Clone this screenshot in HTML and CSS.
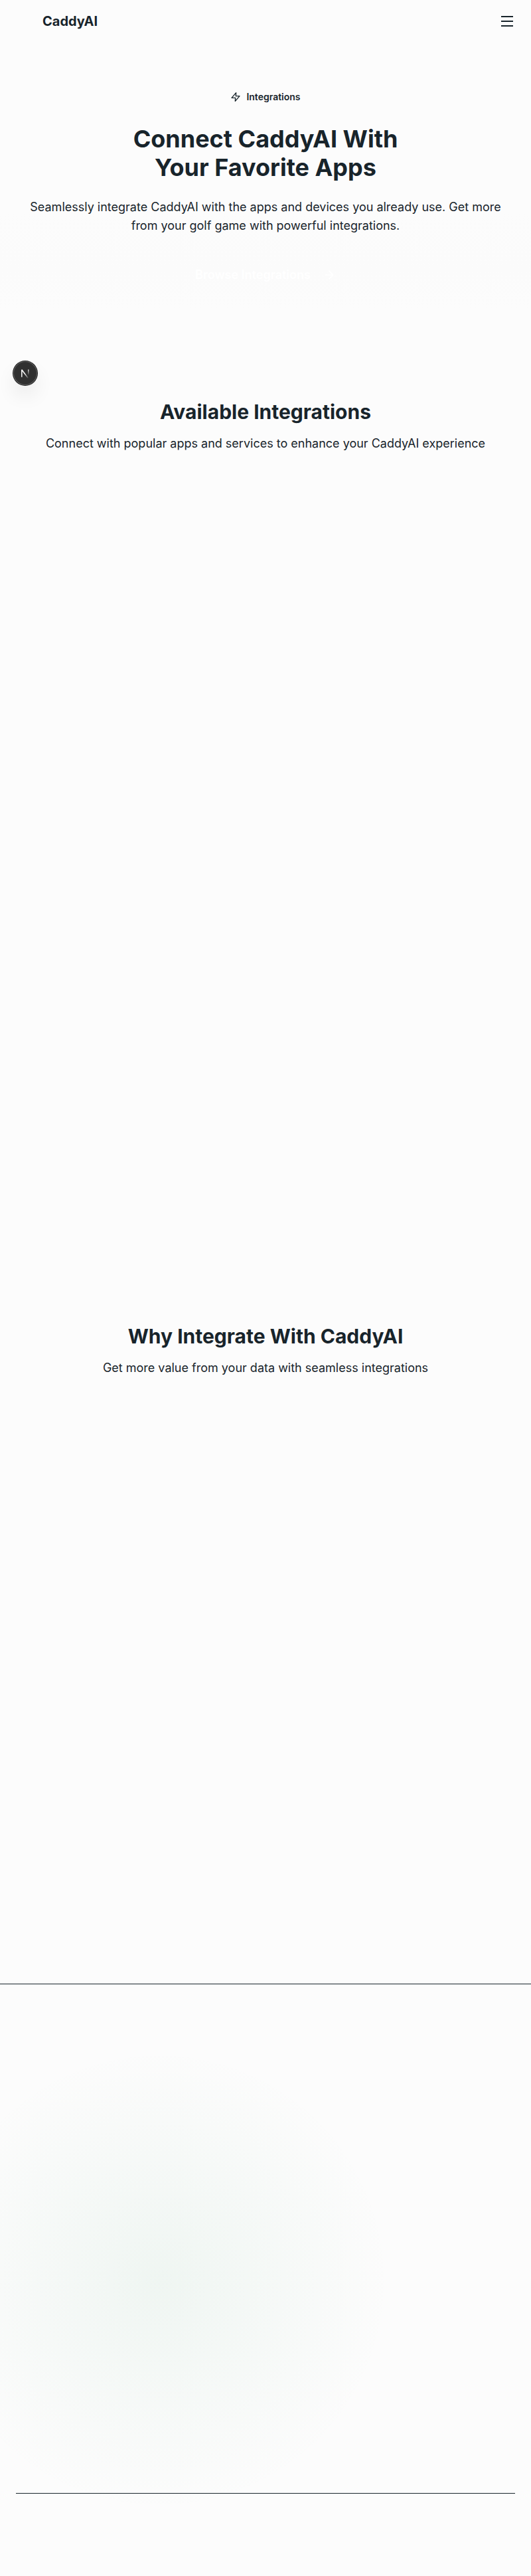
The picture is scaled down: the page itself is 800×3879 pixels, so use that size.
FILE: index.html
```html
<!DOCTYPE html>
<html lang="en">
<head>
<meta charset="utf-8">
<title>Integrations | CaddyAI</title>
<link rel="stylesheet" href="styles.css">
</head>
<body>
<header class="header">
  <span class="brand">CaddyAI</span>
  <svg class="menu" viewBox="0 0 24 24" fill="none" stroke="currentColor" stroke-width="2"><path d="M3 5h18M3 12h18M3 19h18"/></svg>
</header>
<main>
  <section class="hero">
    <div class="badge">
      <svg class="bolt" viewBox="0 0 24 24" fill="none" stroke="currentColor" stroke-width="2" stroke-linecap="round" stroke-linejoin="round"><path d="M13 2.5L3 14h8.5L11 21.5 21 10h-8.5z"/></svg>
      <span>Integrations</span>
    </div>
    <h1 class="title">Connect CaddyAI With<br>Your Favorite Apps</h1>
    <p class="text">Seamlessly integrate CaddyAI with the apps and devices you already use. Get more from your golf game with powerful integrations.</p>
    <a class="button">Browse Integrations
      <svg class="arrow" viewBox="0 0 24 24" fill="none" stroke="currentColor" stroke-width="2" stroke-linecap="round" stroke-linejoin="round"><path d="M5 12h14M12 5l7 7-7 7"/></svg>
    </a>
  </section>
  <section class="available">
    <h2 class="heading">Available Integrations</h2>
    <p class="text">Connect with popular apps and services to enhance your CaddyAI experience</p>
  </section>
  <section class="why">
    <h2 class="heading">Why Integrate With CaddyAI</h2>
    <p class="text">Get more value from your data with seamless integrations</p>
  </section>
</main>
<footer class="footer"><div class="legal"></div></footer>
<div class="dev">
  <svg class="mark" viewBox="0 0 36 36" fill="none">
    <defs>
      <linearGradient id="diag" x1="18" y1="18" x2="23" y2="26" gradientUnits="userSpaceOnUse"><stop stop-color="#fff"/><stop offset="1" stop-color="#fff" stop-opacity="0"/></linearGradient>
      <linearGradient id="stem" x1="23" y1="12" x2="23" y2="21" gradientUnits="userSpaceOnUse"><stop stop-color="#fff"/><stop offset="1" stop-color="#fff" stop-opacity="0"/></linearGradient>
    </defs>
    <path d="M12.8 24V12.8l9.4 12.4" stroke="url(#diag)" stroke-width="1.5" stroke-linejoin="bevel"/>
    <path d="M22.8 12.5v9" stroke="url(#stem)" stroke-width="1.4"/>
  </svg>
</div>
</body>
</html>
```
FILE: styles.css
```css
* { box-sizing: border-box; }
body { margin: 0; background: #fcfcfc; color: #18242b; font-family: Inter, sans-serif; }
h1, h2, p { margin: 0; }
.header { height: 64px; padding: 0 24px 0 64px; display: flex; align-items: center; justify-content: space-between; }
.brand { font-size: 20px; font-weight: 700; line-height: 28px; }
.menu { width: 24px; height: 24px; }
.hero { height: 426px; padding: 74px 40px 0; display: flex; flex-direction: column; align-items: center; text-align: center; background: linear-gradient(#fcfcfc 60%, #fbfbfb 80%, #fcfcfc 94%); }
.badge { display: flex; align-items: center; gap: 8px; height: 16px; margin-bottom: 34px; font-size: 14px; font-weight: 600; line-height: 16px; }
.bolt { width: 16px; height: 16px; }
.title { font-size: 36px; font-weight: 700; line-height: 43.2px; margin-bottom: 24px; }
.text { font-size: 18px; line-height: 28px; text-align: center; }
.button { display: flex; align-items: center; gap: 18px; margin-top: 46px; color: #fff; font-size: 18px; font-weight: 600; line-height: 28px; }
.arrow { width: 20px; height: 20px; }
.heading { font-size: 30px; font-weight: 700; line-height: 36px; text-align: center; margin-bottom: 16px; }
.available { height: 1392px; padding-top: 112px; }
.why { height: 1105px; padding-top: 112px; }
.footer { height: 892px; padding: 766px 24px 0; border-top: 1px solid #18242b; background: radial-gradient(circle at 30% 50%, rgba(19, 135, 69, .056), transparent 49%); }
.legal { height: 1px; background: #18242b; }
.dev { position: absolute; left: 20px; top: 544px; width: 36px; height: 36px; border-radius: 50%; background: #303030; box-shadow: 0 0 0 1px #171717, inset 0 0 0 1px #606060, 0 16px 32px -8px rgba(0, 0, 0, .24); }
.mark { display: block; width: 36px; height: 36px; }
```
